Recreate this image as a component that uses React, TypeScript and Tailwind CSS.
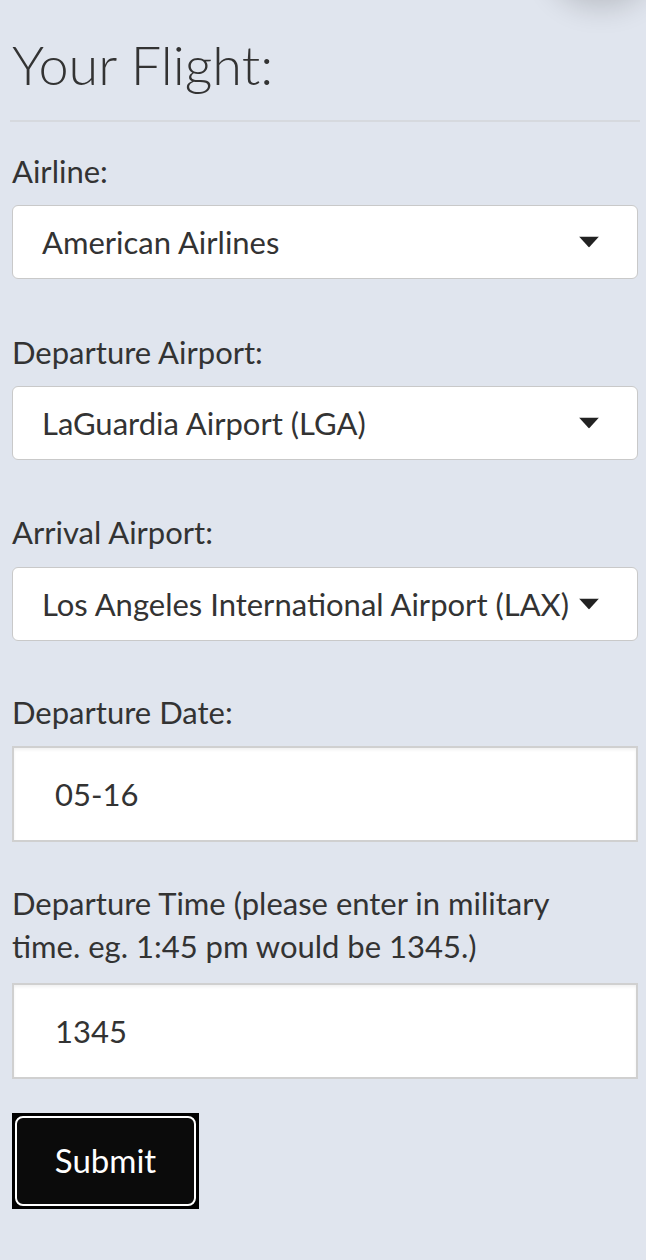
import React from 'react';

const font = { fontFamily: 'Lato, "Liberation Sans", sans-serif' };

function Caret() {
  return (
    <svg className="absolute right-[38px] top-1/2 -translate-y-1/2" width="20" height="11" viewBox="0 0 20 11">
      <polygon points="0,0 20,0 10,11" fill="#222" />
    </svg>
  );
}

function SelectBox({ value }: { value: string }) {
  return (
    <div className="relative flex h-[74px] items-center overflow-hidden rounded-[6px] border border-[#c9c9c9] bg-white pl-[29px] text-[31px] whitespace-nowrap text-[#333]">
      {value}
      <Caret />
    </div>
  );
}

function TextBox({ value }: { value: string }) {
  return (
    <div className="flex h-[96px] items-center border-2 border-[#d0d0d0] bg-white pl-[41px] text-[31px] text-[#333] shadow-[inset_0_2px_3px_rgba(0,0,0,0.06)]">
      {value}
    </div>
  );
}

const label = 'text-[31px] leading-[43px] text-[#333]';

export default function App() {
  return (
    <div className="relative min-h-[1260px] overflow-hidden bg-[#e0e5ee] pr-[8px] pl-[12px]" style={font}>
      {/* shadow of a floating control just above the viewport */}
      <div className="absolute -top-[100px] right-[-10px] h-[100px] w-[110px] rounded-full bg-[#e0e5ee] shadow-[0_8px_28px_rgba(0,0,0,0.16)]" />
      <h1 className="pt-[32px] text-[54px] leading-[66px] font-light text-[#333]">Your Flight:</h1>
      <hr className="mt-[22px] -mx-[2px] border-t-2 border-[#d6d9de]" />

      <div className={`mt-[28px] ${label}`}>Airline:</div>
      <div className="mt-[12px]"><SelectBox value="American Airlines" /></div>

      <div className={`mt-[52px] ${label}`}>Departure Airport:</div>
      <div className="mt-[12px]"><SelectBox value="LaGuardia Airport (LGA)" /></div>

      <div className={`mt-[51px] ${label}`}>Arrival Airport:</div>
      <div className="mt-[13px]"><SelectBox value="Los Angeles International Airport (LAX)" /></div>

      <div className={`mt-[50px] ${label}`}>Departure Date:</div>
      <div className="mt-[12px]"><TextBox value="05-16" /></div>

      <div className={`mt-[40px] ${label}`}>
        Departure Time (please enter in military
        <br />
        time. eg. 1:45 pm would be 1345.)
      </div>
      <div className="mt-[15px]"><TextBox value="1345" /></div>

      <div className="mt-[34px] inline-flex bg-black p-[3px]">
        <div className="flex h-[90px] w-[181px] items-center justify-center rounded-[8px] border-2 border-white bg-[#0b0b0b] text-[33px] text-white">
          Submit
        </div>
      </div>
    </div>
  );
}
